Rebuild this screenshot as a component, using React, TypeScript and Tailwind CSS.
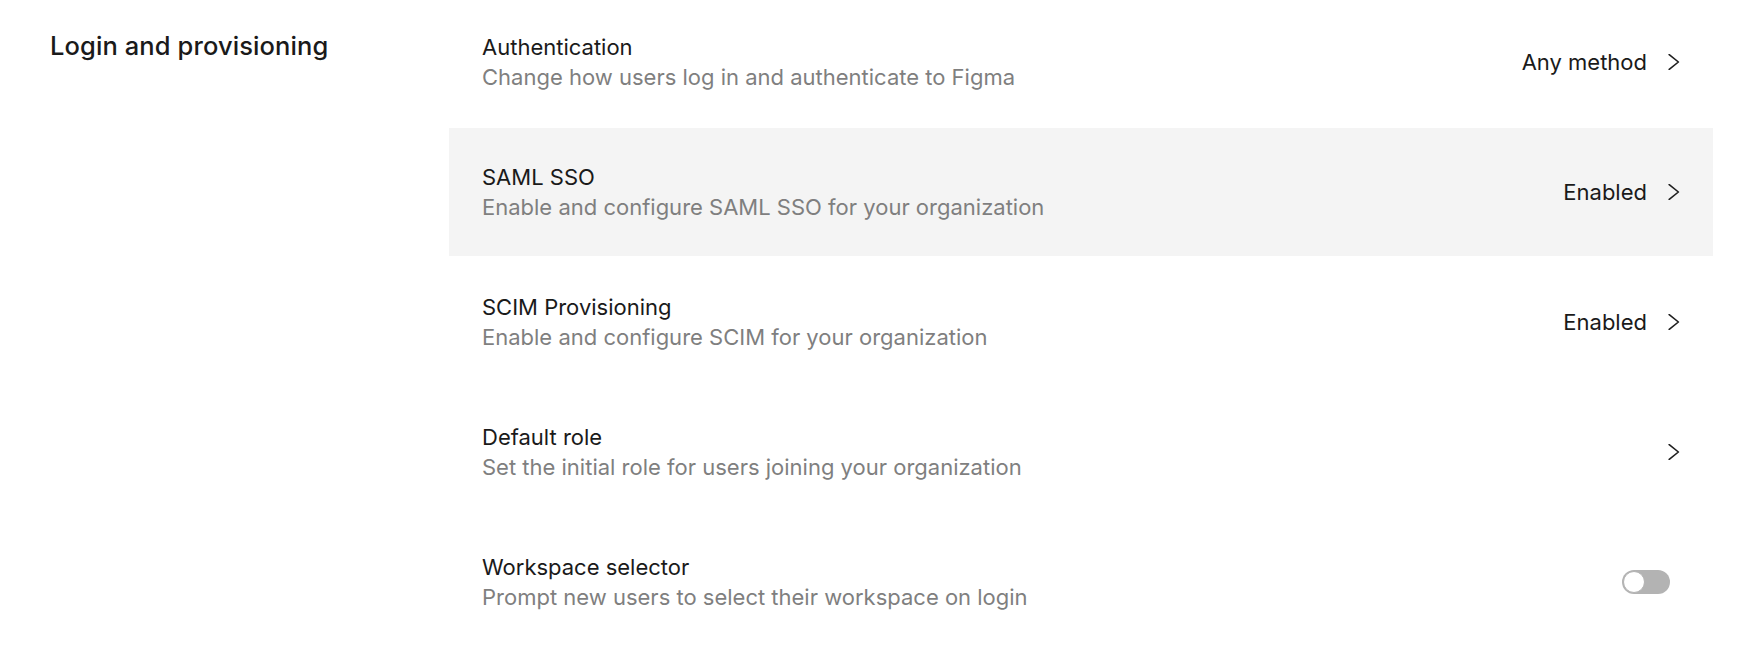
const rows = [
  { title: "Authentication", desc: "Change how users log in and authenticate to Figma", value: "Any method", kind: "link" },
  { title: "SAML SSO", desc: "Enable and configure SAML SSO for your organization", value: "Enabled", kind: "link", active: true },
  { title: "SCIM Provisioning", desc: "Enable and configure SCIM for your organization", value: "Enabled", kind: "link" },
  { title: "Default role", desc: "Set the initial role for users joining your organization", value: "", kind: "link" },
  { title: "Workspace selector", desc: "Prompt new users to select their workspace on login", value: "", kind: "toggle" },
];

function Chevron() {
  return (
    <svg width="12" height="16" viewBox="0 0 12 16" fill="none" className="flex-shrink-0">
      <path d="M1.2 0.6 L10.4 8 L1.2 15.4" stroke="#1e1e1e" strokeWidth="1.6" strokeLinecap="round" strokeLinejoin="round" />
    </svg>
  );
}

function Toggle() {
  return (
    <div className="w-12 h-6 rounded-full bg-[#b3b3b3] p-px flex items-center mr-[10px]">
      <div className="w-[22px] h-[22px] rounded-full bg-white border border-[#b3b3b3]" />
    </div>
  );
}

export default function App() {
  return (
    <div className="w-[1748px] h-[656px] bg-white overflow-hidden font-['Inter',sans-serif] flex pl-[50px] pr-[35px]">
      {/* left column */}
      <div className="w-[399px] flex-shrink-0 pt-[28px]">
        <h2 className="text-[25.5px] leading-[36px] font-medium text-[#1a1a1a] tracking-[0.1px]">Login and provisioning</h2>
      </div>

      {/* settings list */}
      <div className="flex-1 flex flex-col -mt-[3px]">
        {rows.map((r) => (
          <div key={r.title} className="h-[130px] flex items-center py-px">
            <div
              className={
                "w-full h-[128px] flex items-center justify-between pl-[33px] pr-[33px] " +
                (r.active ? "bg-[#f4f4f4]" : "bg-white")
              }
            >
              <div className="flex flex-col">
                <span className="text-[22px] leading-[30px] text-[#1a1a1a]">{r.title}</span>
                <span className="text-[22px] leading-[31px] text-[#7f7f7f]">{r.desc}</span>
              </div>
              {r.kind === "toggle" ? (
                <Toggle />
              ) : (
                <div className="flex items-center gap-[21px]">
                  {r.value && <span className="text-[22px] leading-[30px] text-[#1a1a1a]">{r.value}</span>}
                  <Chevron />
                </div>
              )}
            </div>
          </div>
        ))}
      </div>
    </div>
  );
}
